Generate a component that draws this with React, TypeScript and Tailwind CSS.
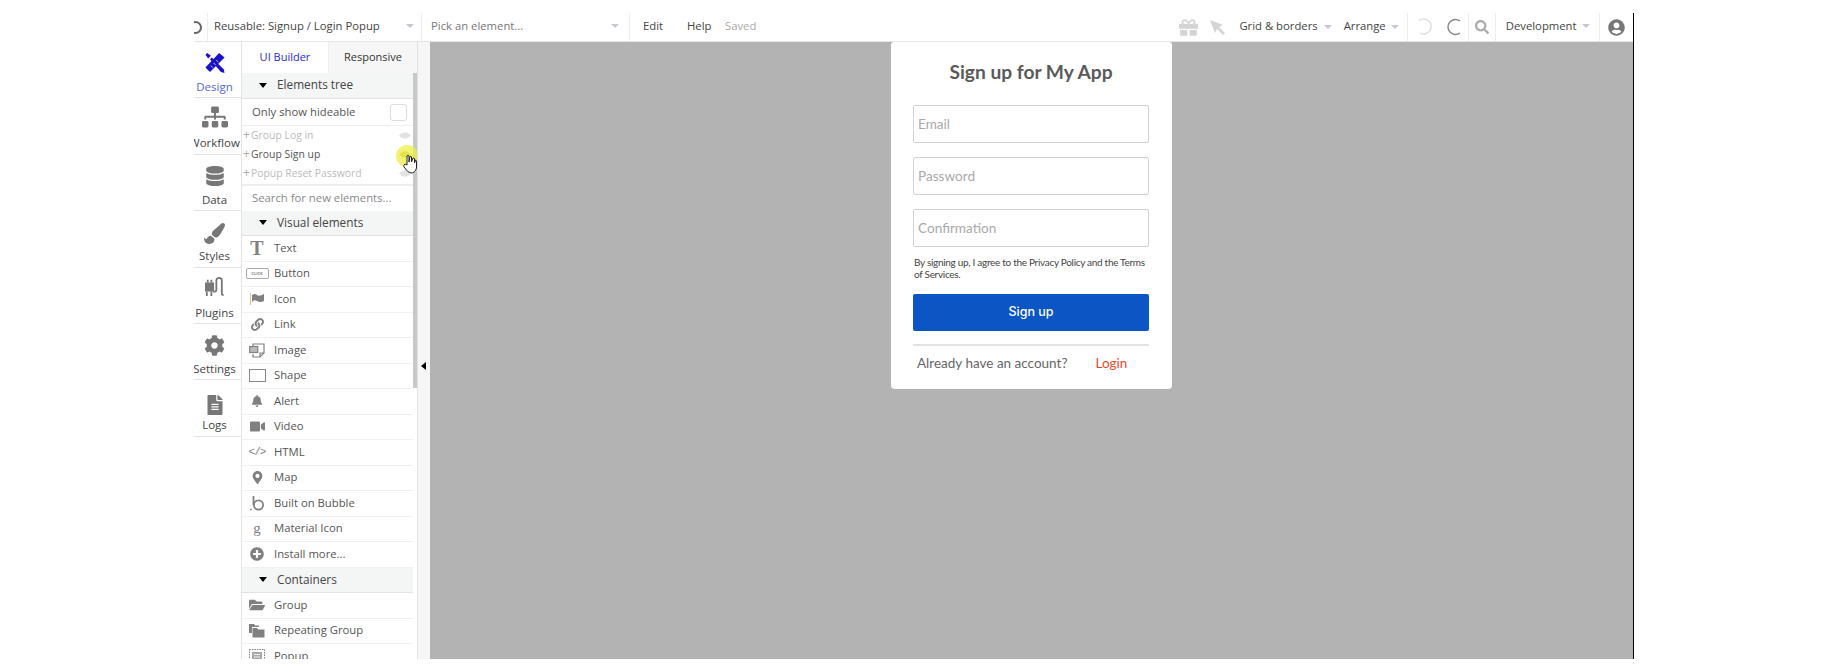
import type { ReactNode } from "react";
import {
  FaBell,
  FaCog,
  FaDatabase,
  FaFileAlt,
  FaFolderOpen,
  FaGift,
  FaLink,
  FaMapMarkerAlt,
  FaPaintBrush,
  FaPlusCircle,
  FaSearch,
  FaSitemap,
  FaUserCircle,
  FaVideo,
} from "react-icons/fa";

const openSans = "font-['Open_Sans',sans-serif]";
const lato = "font-['Lato',sans-serif]";

function Caret({ className = "" }: { className?: string }) {
  return <span className={`h-0 w-0 border-x-[4px] border-t-[4px] border-x-transparent border-t-[#c4c8cf] ${className}`} />;
}

function DesignLogo() {
  return (
    <svg width="22" height="21" viewBox="0 0 23 23" fill="#1a12c8" className="block">
      <path d="M6 8 L8 6 L21 19 L22 23 L18 22 Z" />
      <path d="M16 1 L22 6 L6 22 L1 17 Z" />
      <path d="M1 3 L3 1 L7 4 L4 7 Z" />
      <path d="M7 15 l2 2 M10 12 l2 2 M13 9 l2 2" stroke="#fff" strokeWidth="0.9" />
    </svg>
  );
}

function PlugIcon() {
  return (
    <svg width="22" height="20" viewBox="0 0 24 22" fill="none" className="block">
      <path d="M1 6 h10 v10 h-10 z" fill="#777" />
      <path d="M3 16 v5 M8 16 v5" stroke="#777" strokeWidth="2" />
      <path d="M4 6 v-3 M8 6 v-3" stroke="#777" strokeWidth="2" />
      <path d="M10 16 h1.5 q2 0 2-2 v-10 q0-3 3-3 t3 3 v14 q0 2 2 2" stroke="#777" strokeWidth="2" />
    </svg>
  );
}

function RailItem({ label, icon, shift = "", active }: { label: string; icon: ReactNode; shift?: string; active?: boolean }) {
  return (
    <div className="flex h-[56.4px] flex-col items-center border-b border-[#e4e4e4] pr-[6px]">
      <div className="flex h-[33px] items-end">
        <div className={shift}>{icon}</div>
      </div>
      <span className={`mt-[4px] whitespace-nowrap text-[11.5px] leading-[16px] ${active ? "text-[#5a5fdc]" : "text-[#444]"}`}>
        {label}
      </span>
    </div>
  );
}

function SectionHeader({ label }: { label: string }) {
  return (
    <div className="flex h-[25.5px] items-center border-b border-[#e3e3e3] bg-[#f4f5f5] pl-[17px] text-[11.8px] text-[#444]">
      <span className="h-0 w-0 border-x-[4px] border-t-[5px] border-x-transparent border-t-black" />
      <span className="ml-[10px]">{label}</span>
    </div>
  );
}

function TreeRow({ label, dim }: { label: string; dim?: boolean }) {
  return (
    <div className={`flex h-[19px] items-center justify-between pr-[2px] text-[10.4px] ${dim ? "text-[#bbb]" : "text-[#555]"}`}>
      <span className="flex items-center pl-[1px]">
        <span className="w-[8px] text-[12px] leading-none text-[#aaa]">+</span>
        {label}
      </span>
      <svg width="12" height="9" viewBox="0 0 12 9" fill={dim ? "#e2e2e2" : "#c4c455"}>
        <path d="M0 4.5 Q6 -2 12 4.5 Q6 11 0 4.5 Z" />
      </svg>
    </div>
  );
}

function ElementRow({ label, icon }: { label: string; icon: ReactNode }) {
  return (
    <div className="flex h-[25.5px] items-center border-b border-[#f0f0f0] text-[11.3px] text-[#555]">
      <span className="flex w-[32px] justify-center pr-[2px] text-[#808080]">{icon}</span>
      <span>{label}</span>
    </div>
  );
}

function ImageGlyph() {
  return (
    <svg width="16" height="15" viewBox="0 0 16 15" fill="none" stroke="#808080" strokeWidth="1.2">
      <path d="M4 3 V1 H15 V10 L11 14 H4 V11" />
      <path d="M11 14 V10 H15" />
      <rect x="0.7" y="3.5" width="8" height="6" fill="#bbb" />
    </svg>
  );
}

function RepeatingGlyph() {
  return (
    <svg width="16" height="15" viewBox="0 0 16 15" fill="#808080">
      <path d="M0 1 H5 L6 2.5 H10 V4 H3 V10 H0 Z" />
      <path d="M3.5 5 H8 L9 6.5 H15.5 V14.5 H3.5 Z" />
    </svg>
  );
}

function PopupGlyph() {
  return (
    <svg width="16" height="14" viewBox="0 0 16 14" fill="none" stroke="#808080">
      <rect x="0.5" y="0.5" width="15" height="13" strokeDasharray="1.5 1" />
      <rect x="3" y="3" width="10" height="8" fill="#aaa" stroke="none" />
      <path d="M5 5.5 H11 M5 8 H11" stroke="#eee" />
    </svg>
  );
}

function BubbleGlyph() {
  return (
    <svg width="14" height="16" viewBox="0 0 14 16" fill="none" stroke="#808080" strokeWidth="1.8">
      <path d="M3.5 1 V10" />
      <circle cx="8.5" cy="10" r="4.6" />
      <circle cx="0.9" cy="14.6" r="0.9" fill="#808080" stroke="none" />
    </svg>
  );
}

const visualElements: { label: string; icon: ReactNode }[] = [
  { label: "Text", icon: <span className="font-['Liberation_Serif',serif] text-[20px] font-bold leading-none">T</span> },
  {
    label: "Button",
    icon: (
      <span className="flex h-[11px] w-[23px] items-center justify-center rounded-[2px] border border-[#aaa] text-[4px] font-bold leading-none">
        CLICK
      </span>
    ),
  },
  {
    label: "Icon",
    icon: (
      <svg width="14" height="12" viewBox="0 0 14 12" fill="#808080">
        <path d="M0 0 H1 V12 H0 Z" fill="#d8c49a" />
        <path d="M2 2 Q5 0 7 2 T14 1 V8 Q10 10 7 8 T2 9 Z" />
      </svg>
    ),
  },
  { label: "Link", icon: <FaLink size={13} /> },
  { label: "Image", icon: <ImageGlyph /> },
  { label: "Shape", icon: <span className="block h-[13px] w-[17px] border border-[#888]" /> },
  { label: "Alert", icon: <FaBell size={12} /> },
  { label: "Video", icon: <FaVideo size={15} /> },
  { label: "HTML", icon: <span className="font-['Liberation_Mono',monospace] text-[11px] leading-none tracking-[-1px]">{"</>"}</span> },
  { label: "Map", icon: <FaMapMarkerAlt size={13} /> },
  { label: "Built on Bubble", icon: <BubbleGlyph /> },
  { label: "Material Icon", icon: <span className="font-['Liberation_Serif',serif] text-[15px] leading-none">g</span> },
  { label: "Install more...", icon: <FaPlusCircle size={14} /> },
];

const containers: { label: string; icon: ReactNode }[] = [
  { label: "Group", icon: <FaFolderOpen size={16} /> },
  { label: "Repeating Group", icon: <RepeatingGlyph /> },
  { label: "Popup", icon: <PopupGlyph /> },
];

function Field({ label }: { label: string }) {
  return (
    <div className="flex h-[37.5px] items-center rounded-[2px] border border-[#d2d2d2] pl-[4px] text-[13.6px] text-[#a9a9a9]">
      {label}
    </div>
  );
}

export default function App() {
  return (
    <div className={`h-[670px] w-[1830px] overflow-hidden bg-white pt-[13px] ${openSans}`}>
      <div className="ml-[194px] flex h-[645.5px] w-[1440px] flex-col border-r-[1.5px] border-black">
        {/* top bar */}
        <div className="flex h-[29px] shrink-0 items-center border-b border-[#e6e6e6] text-[11.3px] text-[#444]">
          <div className="flex h-full w-[14px] items-center overflow-hidden border-r border-[#eee]">
            <span className="ml-[-5px] block h-[13px] w-[13px] rounded-full border-2 border-[#666]" />
          </div>
          <div className="flex h-full w-[214px] items-center justify-between border-r border-[#eee] pb-[2px] pl-[6px] pr-[7px]">
            <span>Reusable: Signup / Login Popup</span>
            <Caret />
          </div>
          <div className="flex h-full w-[208px] items-center justify-between border-r border-[#eee] pb-[2px] pl-[9px] pr-[10px] text-[#777]">
            <span>Pick an element...</span>
            <Caret />
          </div>
          <span className="mb-[2px] ml-[13px] w-[44px]">Edit</span>
          <span className="mb-[2px] w-[38px]">Help</span>
          <span className="mb-[2px] text-[#aaa]">Saved</span>
          <div className="ml-[423px] flex h-full items-center">
            <FaGift size={19} className="text-[#d4d4d4]" />
            <svg width="15" height="15" viewBox="0 0 15 15" fill="#d4d4d4" className="ml-[12px]">
              <path d="M0 0 L13 5 L9 7 L15 13 L13 15 L7 9 L5 13 Z" />
            </svg>
            <span className="mb-[2px] ml-[14px]">Grid &amp; borders</span>
            <Caret className="ml-[6px] border-t-[#bcc4d4]" />
            <span className="mb-[2px] ml-[12px]">Arrange</span>
            <Caret className="ml-[5px] border-t-[#bcc4d4]" />
            <div className="ml-[8px] flex h-full w-[62px] items-center gap-[12px] border-x border-[#eee] pl-[8px]">
              <svg width="18" height="18" viewBox="0 0 18 18" fill="none" stroke="#ddd" strokeWidth="1.4">
                <path d="M3 2.5 A7.5 7.5 0 1 1 4 15" />
              </svg>
              <svg width="16" height="18" viewBox="0 0 16 18" fill="none" stroke="#888" strokeWidth="1.4">
                <path d="M14 3 A7.5 7.5 0 1 0 14 15" />
              </svg>
            </div>
            <div className="flex h-full w-[27px] items-center justify-center border-r border-[#eee]">
              <FaSearch size={14} className="text-[#aaa]" />
            </div>
            <div className="flex h-full w-[104px] items-center justify-between border-r border-[#eee] pb-[2px] pl-[10px] pr-[9px]">
              <span>Development</span>
              <Caret />
            </div>
            <FaUserCircle size={17} className="ml-[8px] text-[#777]" />
          </div>
        </div>

        <div className="flex min-h-0 flex-1">
          {/* left rail */}
          <div className="w-[48px] shrink-0 overflow-hidden border-r border-[#e4e4e4] bg-white">
            <RailItem label="Design" active shift="mb-[2px]" icon={<DesignLogo />} />
            <RailItem label="Workflow" shift="mb-[1px]" icon={<FaSitemap size={26} className="block text-[#777]" />} />
            <RailItem label="Data" shift="mb-[2px]" icon={<FaDatabase size={20} className="block text-[#777]" />} />
            <RailItem label="Styles" icon={<FaPaintBrush size={21} className="block text-[#777]" />} />
            <RailItem label="Plugins" shift="mb-[4px]" icon={<PlugIcon />} />
            <RailItem label="Settings" shift="mb-[1px]" icon={<FaCog size={21} className="block text-[#777]" />} />
            <RailItem label="Logs" shift="mb-[-2px]" icon={<FaFileAlt size={20} className="block text-[#777]" />} />
          </div>

          {/* elements panel */}
          <div className="relative w-[176px] shrink-0 overflow-hidden border-r border-[#e2e2e2] bg-white">
            <div className="flex h-[31px] text-[11px]">
              <div className="flex w-[87px] items-center justify-center border-r border-[#eee] text-[#2b2bd0]">UI Builder</div>
              <div className="flex flex-1 items-center justify-center bg-[#f6f6f6] text-[#333]">Responsive</div>
            </div>
            <div className="mr-[4px]">
              <SectionHeader label="Elements tree" />
              <div className="flex h-[27px] items-center justify-between border-b border-[#eee] pl-[10px] pr-[6px] pt-[2px] text-[11.3px] text-[#555]">
                <span>Only show hideable</span>
                <span className="h-[17px] w-[17px] rounded-[3px] border border-[#ddd]" />
              </div>
              <div className="flex h-[60px] flex-col justify-center border-b-2 border-[#eee]">
                <TreeRow label="Group Log in" dim />
                <TreeRow label="Group Sign up" />
                <TreeRow label="Popup Reset Password" dim />
              </div>
              <div className="flex h-[25px] items-center pl-[10px] text-[11.3px] text-[#888]">Search for new elements...</div>
              <SectionHeader label="Visual elements" />
              {visualElements.map((item) => (
                <ElementRow key={item.label} label={item.label} icon={item.icon} />
              ))}
              <SectionHeader label="Containers" />
              {containers.map((item) => (
                <ElementRow key={item.label} label={item.label} icon={item.icon} />
              ))}
            </div>
            {/* scrollbar */}
            <div className="absolute right-0 top-[31px] h-[315px] w-[4px] bg-[#c8c8c8]" />
            {/* click highlight and pointer */}
            <div className="absolute left-[154px] top-[103px] h-[22px] w-[22px] rounded-full bg-[#eeee44]/75" />
            <svg width="14" height="20" viewBox="0 0 14 20" className="absolute left-[161px] top-[112px]" fill="#fff" stroke="#222" strokeWidth="1">
              <path d="M4 11 V2 Q5 0.5 6 2 V8 L7 2.5 Q8 1.5 8.5 3 V8 L10 4 Q11 3.5 11.5 5 V9 L12.5 6 Q13.5 6 13.5 8 V14 Q12 19 8 19 Q5 19 1 13 Q0 11 2 10 Z" />
            </svg>
          </div>

          {/* collapse strip */}
          <div className="flex w-[12px] shrink-0 items-center justify-center bg-[#f6f6f6] pr-[1px] pt-[32px]">
            <span className="h-0 w-0 border-y-[4px] border-r-[5px] border-y-transparent border-r-black" />
          </div>

          {/* canvas */}
          <div className="flex flex-1 justify-center bg-[#b3b3b3]">
            <div className={`h-[347px] w-[281px] rounded-b-[4px] rounded-t-[3px] bg-white pl-[22px] pr-[23px] ${lato}`}>
              <h1 className="mt-[16.5px] text-center text-[19.2px] font-bold leading-[26px] text-[#5a5a5a]">Sign up for My App</h1>
              <div className="mt-[20.5px] flex flex-col gap-[14.5px]">
                <Field label="Email" />
                <Field label="Password" />
                <Field label="Confirmation" />
              </div>
              <p className="mt-[9px] pl-[1px] text-[10px] leading-[12px] tracking-[-0.3px] text-[#444]">
                By signing up, I agree to the Privacy Policy and the Terms of Services.
              </p>
              <div className="mt-[14px] flex h-[37.5px] items-center justify-center rounded-[2px] bg-[#0c55c4] font-['Inter',sans-serif] text-[12.5px] font-medium text-white">
                Sign up
              </div>
              <div className="mt-[13px] flex h-[36px] items-center border-t-2 border-[#e2e2e2] pl-[4px] pt-[1px] text-[13.5px] text-[#666]">
                <span>Already have an account?</span>
                <span className="ml-[28px] text-[#e8492a]">Login</span>
              </div>
            </div>
          </div>
        </div>
      </div>
    </div>
  );
}
